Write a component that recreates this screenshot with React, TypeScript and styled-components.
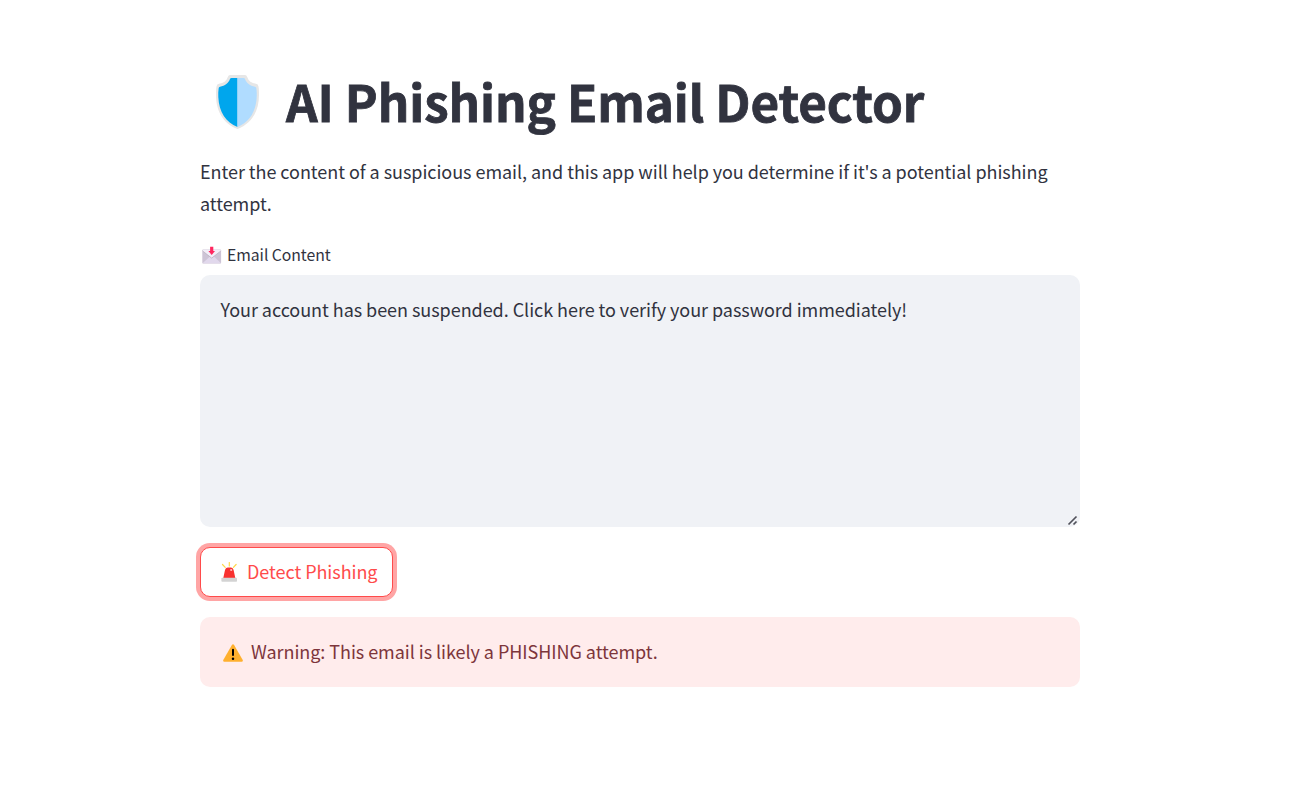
import React from "react";
import styled, { createGlobalStyle } from "styled-components";

const GlobalStyle = createGlobalStyle`
  * { box-sizing: border-box; }
  body {
    margin: 0;
    background: #ffffff;
    color: #31333f;
    font-family: "Noto Sans CJK SC", "Open Sans", sans-serif;
    font-size: 18px;
    line-height: 32px;
    letter-spacing: -0.045px;
  }
`;

const Page = styled.main`
  width: 880px;
  margin-left: 200px;
  padding-top: 70px;
  display: flex;
  flex-direction: column;
`;

const Title = styled.h1`
  margin: 0;
  height: 66px;
  padding-left: 15px;
  display: flex;
  align-items: center;
  font-size: 49.4px;
  font-weight: 700;
  line-height: 66px;
  letter-spacing: -0.1px;
  white-space: nowrap;
`;

const TitleText = styled.span`
  margin: 0 0 5px 26px;
  -webkit-text-stroke: 0.8px currentColor;
`;

const Intro = styled.p`
  margin: 19px 0 0;
`;

const Label = styled.label`
  margin-top: 22px;
  height: 28px;
  padding-left: 2px;
  display: flex;
  align-items: center;
  gap: 5px;
  font-size: 15.75px;
  line-height: 28px;
`;

const Field = styled.div`
  position: relative;
  margin-top: 6px;
  height: 252px;
`;

const TextArea = styled.textarea`
  display: block;
  width: 100%;
  height: 100%;
  padding: 18px 20px 18px 20.5px;
  border: 0;
  border-radius: 10px;
  outline: 0;
  resize: none;
  background: #f0f2f6;
  color: inherit;
  font: inherit;
  letter-spacing: inherit;
`;

const Grip = styled.svg`
  position: absolute;
  right: 2px;
  bottom: 1px;
`;

const DetectButton = styled.button`
  align-self: flex-start;
  width: 193px;
  height: 50px;
  margin-top: 20px;
  padding: 0 0 0 20px;
  display: flex;
  align-items: center;
  gap: 9px;
  border: 1px solid #ff4b4b;
  border-radius: 10px;
  box-shadow: 0 0 0 4px #ffa5a5;
  background: #ffffff;
  color: #ff4b4b;
  font: inherit;
  letter-spacing: inherit;
  white-space: nowrap;
`;

const ButtonText = styled.span`
  margin-bottom: 2px;
`;

const Alert = styled.div`
  margin-top: 20px;
  height: 70px;
  padding-left: 23px;
  display: flex;
  align-items: center;
  gap: 8px;
  border-radius: 10px;
  background: #ffecec;
  color: #7d353b;
`;

const AlertText = styled.span`
  margin-bottom: 2px;
`;

const ShieldIcon = () => (
  <svg width="45" height="56" viewBox="0 0 45 56" aria-hidden="true">
    <path d="M15 0H30Q31.5 0 32.2 2C33.5 6 36.5 8.2 41 8.7Q43.2 9 43.5 11.5C44 14 44 17 44 20C44 38 35 49.5 22.5 54C10 49.5 1 38 1 20C1 17 1 14 1.5 11.5Q1.8 9 4 8.7C8.500 8.200 11.500 6 12.800 2Q13.500 0 15 0Z" fill="#e6e6e6" />
    <path d="M22.500 3H16.500Q15.300 3 15 4C13.500 8 10 11 5 11.700Q3.900 12 3.700 13C3.200 16 3.200 19 3.300 22C4 37 11 47.500 22.500 52Z" fill="#00a6ed" />
    <path d="M22.500 3H28.500Q29.700 3 30 4C31.500 8 35 11 40 11.700Q41.100 12 41.300 13C41.800 16 41.800 19 41.700 22C41 37 34 47.500 22.500 52Z" fill="#b0dcff" />
  </svg>
);

const EnvelopeIcon = () => (
  <svg width="20" height="18" viewBox="0 0 20 18" aria-hidden="true">
    <rect x="0.300" y="3.500" width="18.800" height="14" rx="0.800" fill="#cdc4d6" />
    <path d="M.5 17.200L8 10.500H12L19 17.200Z" fill="#e1d8ec" />
    <path d="M.4 3.700H19V5L9.700 12L.4 5Z" fill="#f3eef8" />
    <path d="M.4 4.800L9.700 12.100L19 4.800" fill="none" stroke="#b4acbc" strokeWidth=".7" />
    <path d="M8.100 .8H11.300V5H13L9.700 9L6.400 5H8.100Z" fill="#ff2860" />
  </svg>
);

const SirenIcon = () => (
  <svg width="17" height="20" viewBox="0 0 17 20" aria-hidden="true">
    <path d="M8.300 .5V4M1.500 2.500L4.200 5.300M15.100 2.500L12.400 5.300" stroke="#ffd84a" strokeWidth="1.200" strokeLinecap="round" />
    <path d="M2.300 16L3.900 8.500Q4.500 5.600 7 5.600H9.600Q12.100 5.600 12.700 8.500L14.300 16Z" fill="#f8312f" />
    <circle cx="10.200" cy="8" r="1.100" fill="#ffc0c0" />
    <rect x="0.400" y="15.700" width="15.600" height="4" rx="0.800" fill="#d3d3d3" />
  </svg>
);

const WarningIcon = () => (
  <svg width="20" height="18" viewBox="0 0 20 18" aria-hidden="true">
    <path d="M8.900 1Q10 -.7 11.100 1L19.600 15.800Q20.400 17.800 18.600 17.800H1.400Q-.4 17.800 .4 15.800Z" fill="#ffb02e" />
    <path d="M10 5.700V11" stroke="#000" strokeWidth="2" strokeLinecap="round" />
    <circle cx="10" cy="14.800" r="1.250" fill="#000" />
  </svg>
);

const AlertIcon = styled.span`
  display: flex;
  margin-top: 2px;
`;

export default function App() {
  return (
    <>
      <GlobalStyle />
      <Page>
        <Title>
          <ShieldIcon />
          <TitleText>AI Phishing Email Detector</TitleText>
        </Title>
        <Intro>
          Enter the content of a suspicious email, and this app will help you determine if it's a potential phishing attempt.
        </Intro>
        <Label htmlFor="email">
          <EnvelopeIcon />
          <span>Email Content</span>
        </Label>
        <Field>
          <TextArea
            id="email"
            spellCheck={false}
            defaultValue="Your account has been suspended. Click here to verify your password immediately!"
          />
          <Grip width="11" height="11" viewBox="0 0 11 11" aria-hidden="true">
            <path d="M1.500 9.500L9.500 1.500M6.500 9.500L9.500 6.500" stroke="#50515a" strokeWidth="1.700" />
          </Grip>
        </Field>
        <DetectButton type="button">
          <SirenIcon />
          <ButtonText>Detect Phishing</ButtonText>
        </DetectButton>
        <Alert role="alert">
          <AlertIcon>
            <WarningIcon />
          </AlertIcon>
          <AlertText>Warning: This email is likely a PHISHING attempt.</AlertText>
        </Alert>
      </Page>
    </>
  );
}
